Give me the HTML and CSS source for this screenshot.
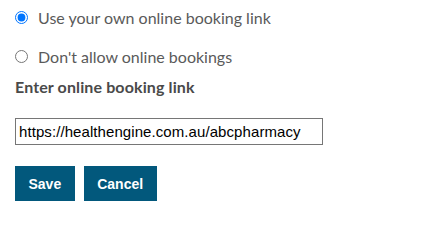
FILE: index.html
```html
<!DOCTYPE html>
<html>
<head>
<meta charset="utf-8">
<link rel="stylesheet" href="styles.css">
</head>
<body>
<form class="form">
  <label class="option first">
    <input type="radio" name="booking" class="radio" checked>
    <span class="option-text">Use your own online booking link</span>
  </label>
  <label class="option">
    <input type="radio" name="booking" class="radio">
    <span class="option-text">Don't allow online bookings</span>
  </label>
  <div class="field-label">Enter online booking link</div>
  <input type="text" class="link-input" value="https://healthengine.com.au/abcpharmacy">
  <div class="actions">
    <button type="button" class="btn">Save</button>
    <button type="button" class="btn">Cancel</button>
  </div>
</form>
</body>
</html>
```
FILE: styles.css
```css
html, body {
  margin: 0;
  padding: 0;
  background: #ffffff;
}
.form {
  display: flex;
  flex-direction: column;
  align-items: flex-start;
  padding-left: 15px;
}
.option {
  display: flex;
  align-items: center;
  height: 35px;
  color: #5a5a5a;
  font-family: Lato, "Open Sans", sans-serif;
  font-size: 16px;
}
.option + .option {
  margin-top: 4px;
}
.radio {
  margin: 0 10px 0 0;
  width: 13px;
  height: 13px;
}
.field-label {
  margin-top: 3px;
  font-family: Lato, "Open Sans", sans-serif;
  font-weight: 700;
  font-size: 16px;
  letter-spacing: 0.12px;
  line-height: 20px;
  color: #4a4a4a;
}
.link-input {
  margin-top: 21px;
  box-sizing: border-box;
  width: 308px;
  height: 27px;
  padding: 0 3px;
  border: 1px solid #767676;
  border-radius: 0;
  font-family: "Liberation Sans", Arial, sans-serif;
  font-size: 15px;
  letter-spacing: 0.08px;
  color: #000;
  outline: none;
}
.actions {
  margin-top: 21px;
  display: flex;
  gap: 9px;
}
.btn {
  height: 35px;
  padding: 0 13.5px;
  border: none;
  border-radius: 0;
  background: #02587c;
  color: #ffffff;
  font-family: "Liberation Sans", Arial, sans-serif;
  font-weight: 700;
  font-size: 14px;
}
```
